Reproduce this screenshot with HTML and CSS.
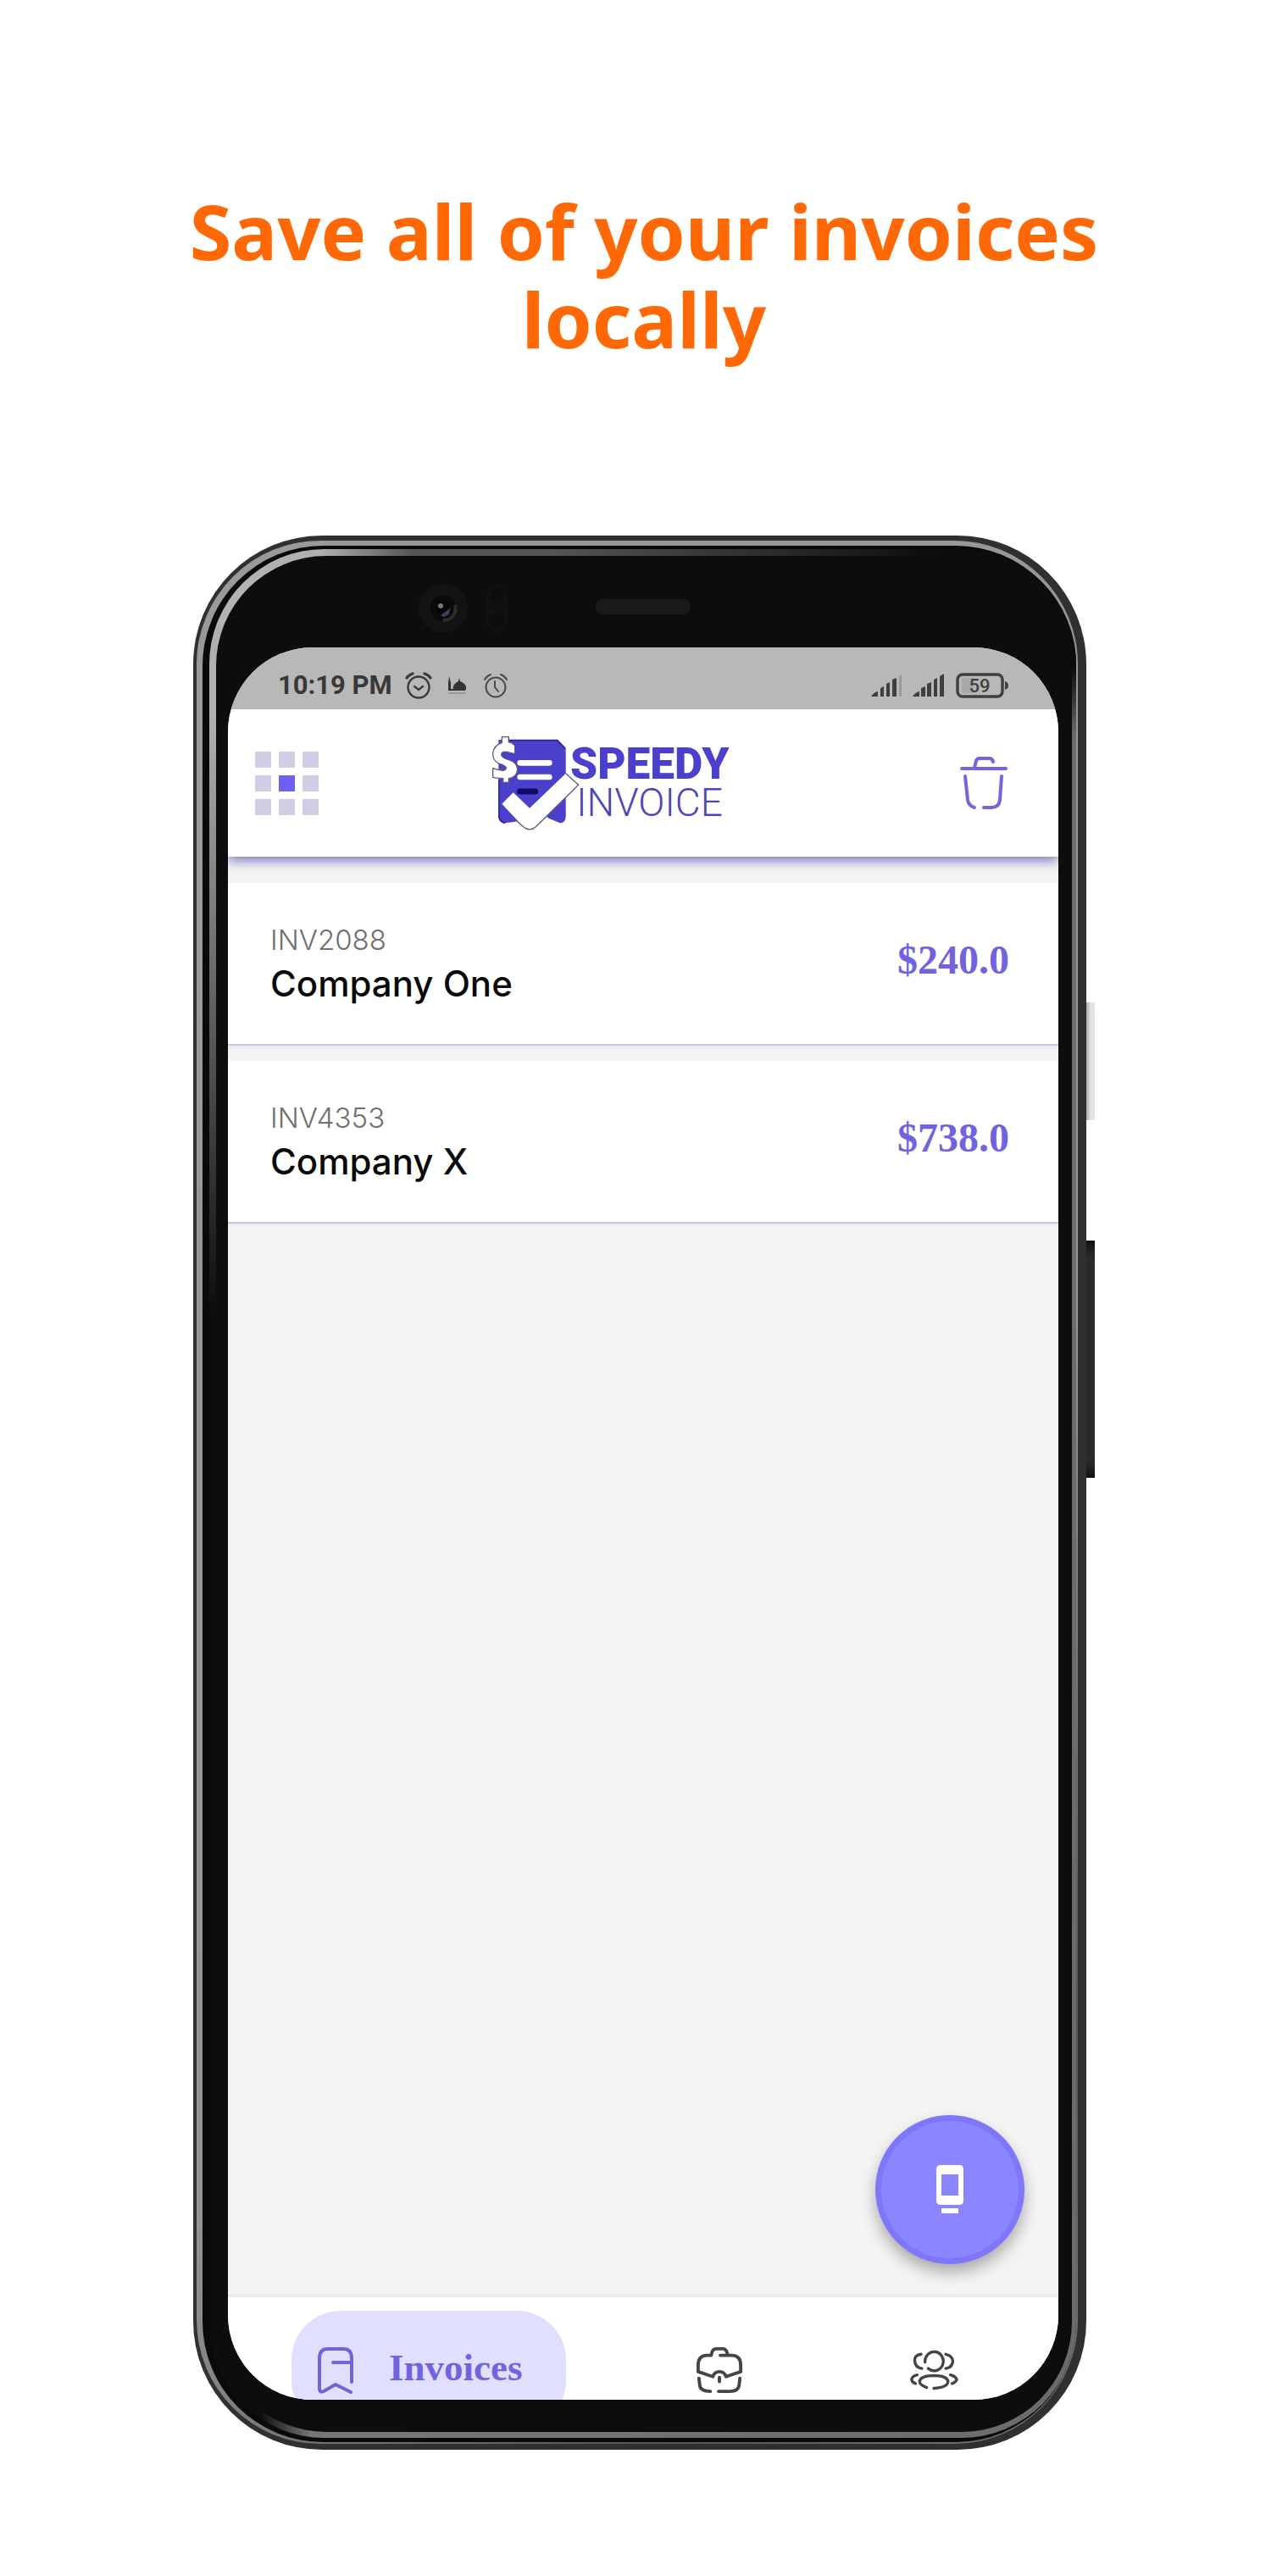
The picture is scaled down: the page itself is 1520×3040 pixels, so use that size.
FILE: index.html
```html
<!DOCTYPE html>
<html lang="en">
<head>
<meta charset="utf-8">
<meta name="viewport" content="width=device-width, initial-scale=1">
<title>Speedy Invoice</title>
<link rel="stylesheet" href="styles.css">
</head>
<body>
<div class="page">
  <h1 class="headline">Save all of your invoices locally</h1>

  <div class="phone">
    <span class="side-key side-key-power"></span>
    <span class="side-key side-key-volume"></span>
    <div class="rim"><div class="groove"><div class="bevel"><div class="glass">
      <svg class="sensors" viewBox="0 0 250 60" aria-hidden="true">
        <circle cx="30" cy="30" r="29" fill="#131313"/>
        <circle cx="30" cy="30" r="15" fill="#0a0a0a"/>
        <path d="M44 26a14 14 0 0 1-14 18" fill="none" stroke="#2c2c2c" stroke-width="4"/>
        <circle cx="29" cy="29" r="8" fill="#050508"/>
        <path d="M29 38l8-6-1 4-5 3z" fill="#3a4266" stroke="#3a4266" stroke-width="2"/>
        <circle cx="27" cy="27" r="3" fill="#777"/>
        <rect x="81" y="3" width="25" height="55" rx="12" fill="#111"/>
        <circle cx="93" cy="15" r="9" fill="#0d0d0d"/>
        <circle cx="93" cy="45" r="9" fill="#0d0d0d"/>
      </svg>
      <span class="speaker"></span>

      <div class="screen">
        <div class="status">
          <span class="clock">10:19 PM</span>
          <svg class="status-alarm" viewBox="0 0 32 32" aria-hidden="true">
            <g fill="none" stroke="#3b3b3b" stroke-width="2.4" stroke-linecap="round">
              <circle cx="16" cy="18" r="12.500"/>
              <path d="M11 17l5 4 5-4"/>
              <path d="M2 7q3-4 7-5M30 7q-3-4-7-5" stroke-width="3.200"/>
            </g>
          </svg>
          <svg class="status-mosque" viewBox="0 0 24 24" aria-hidden="true">
            <path d="M1 18V9l1-8 2 8v7h3c-1-4 2-7 6-9l1-4 1 4c5 2 8 5 7 9l-1 2z" fill="#333"/>
            <path d="M1 21h21" stroke="#8f8f8f" stroke-width="1.500"/>
          </svg>
          <svg class="status-timer" viewBox="0 0 30 30" aria-hidden="true">
            <g fill="none" stroke="#4a4a4a" stroke-width="2" stroke-linecap="round">
              <circle cx="15" cy="17" r="11.500"/>
              <path d="M14 10v7l4 5"/>
              <path d="M2 8q2-4 7-6M28 8q-2-4-7-6"/>
            </g>
          </svg>
          <svg class="signal signal-first" viewBox="0 0 38 28" aria-hidden="true">
            <path d="M0 27q3-5 8-6v6zM11 27V17l4-2v12zM18 27V12l4-2v17zM25 27V7l5-2v22z" fill="#3f3f3f"/>
            <path d="M33 27V3l3-2v26z" fill="#9b9b9b"/>
          </svg>
          <svg class="signal" viewBox="0 0 38 28" aria-hidden="true">
            <path d="M0 27q3-5 8-6v6zM10 27V17l5-2v12zM17 27V12l5-2v17zM25 27V7l4-2v22zM32 27V3l5-3v27z" fill="#3f3f3f"/>
          </svg>
          <svg class="battery" viewBox="0 0 62 30" aria-hidden="true">
            <rect x="7" y="6" width="14" height="18" fill="#a8a8a8"/>
            <rect x="2" y="2" width="53" height="26" rx="6" fill="none" stroke="#404040" stroke-width="3.500"/>
            <path d="M58 10q4 1 4 5t-4 5z" fill="#404040"/>
            <text x="28" y="23" text-anchor="middle" class="battery-text">59</text>
          </svg>
        </div>

        <header class="topbar">
          <button class="icon-button" type="button" aria-label="Menu">
            <svg class="grid-icon" viewBox="0 0 75 75">
              <path fill="#d2cde4" d="M0 0h19v19H0zM28 0h19v19H28zM56 0h19v19H56zM0 28h19v19H0zM56 28h19v19H56zM0 56h19v19H0zM28 56h19v19H28zM56 56h19v19H56z"/>
              <path fill="#6c5ff2" d="M28 28h19v19H28z"/>
            </svg>
          </button>
          <svg class="logo" viewBox="54 80 864 345" role="img" aria-label="Speedy Invoice">
            <path d="M82 98H290L320 128V368Q320 392 300 393L260 376Q235 350 200 372L140 388L105 393Q84 390 82 370Z" fill="#4b40cb"/>
            <path d="M84 240V374Q88 390 105 393M120 100H290L318 128" fill="none" stroke="#2c2290" stroke-width="5"/>
            <path d="M158 180H262M158 230H262" stroke="#fff" stroke-width="20" stroke-linecap="round"/>
            <path d="M158 281H212" stroke="#120a66" stroke-width="21" stroke-linecap="round"/>
            <path d="M94 325L134 285L192 340L320 217L365 258L214 406Q192 425 170 406Z" fill="#fff"/>
            <path d="M140 380L170 406Q192 425 214 406L365 258L320 217" fill="none" stroke="#5d5a80" stroke-width="4"/>
            <path d="M140 118V148L124 144Q92 134 92 152Q94 164 122 170Q149 180 149 204Q146 232 118 235V249H98V235Q78 235 62 231V199Q80 205 98 207Q112 204 108 194Q98 187 82 182Q60 170 62 144Q66 118 94 108V88H118V106Q130 108 140 118Z" fill="#fff" stroke="#5d5a80" stroke-width="4"/>
            <text x="336" y="235" class="logo-bold">SPEEDY</text>
            <text x="358" y="367" class="logo-light">INVOICE</text>
          </svg>
          <button class="icon-button" type="button" aria-label="Delete">
            <svg class="trash-icon" viewBox="0 0 58 66" fill="none" stroke="#7564dc" stroke-width="4" stroke-linecap="round" stroke-linejoin="round">
              <path d="M3 16H55M18 15L20 7Q21 4 24 4H36Q39 4 40 8M7 25L10 53Q11 60 18 62M50 25L48 53Q47 62 38 62H29"/>
            </svg>
          </button>
        </header>

        <main class="content">
          <ul class="invoices">
            <li class="invoice">
              <div class="invoice-info">
                <span class="invoice-number">INV2088</span>
                <span class="invoice-name">Company One</span>
              </div>
              <span class="invoice-total">$240.0</span>
            </li>
            <li class="invoice">
              <div class="invoice-info">
                <span class="invoice-number">INV4353</span>
                <span class="invoice-name">Company X</span>
              </div>
              <span class="invoice-total">$738.0</span>
            </li>
          </ul>
          <button class="fab" type="button" aria-label="New invoice">
            <svg class="fab-icon" viewBox="0 0 32 58">
              <path fill="#fff" fill-rule="evenodd" d="M5 0H27Q32 0 32 5V42Q32 47 27 47H5Q0 47 0 42V5Q0 0 5 0ZM6 11V36H26V11ZM6 51H26V57H6Z"/>
            </svg>
          </button>
        </main>

        <nav class="tabs">
          <a class="tab tab-active" href="#invoices">
            <svg class="bookmark-icon" viewBox="0 0 44 56" fill="none" stroke="#7264d8" stroke-width="4" stroke-linecap="round" stroke-linejoin="round">
              <path d="M41 42V14Q41 3 31 3H13Q3 3 3 14V50Q3 55 8 53L22 45L40 54M19 19H40"/>
            </svg>
            <span class="tab-label">Invoices</span>
          </a>
          <a class="tab" href="#business" aria-label="Business">
            <svg class="tab-icon" viewBox="0 0 58 58" fill="none" stroke="#454545" stroke-width="4" stroke-linecap="round" stroke-linejoin="round">
              <path d="M30 11H44Q55 11 55 23V31L37 37Q35 31 29 31T21 37L3 31V23Q3 11 14 11H19Q20 3 25 3H34Q38 4 39 10M29 38V43M4 39L5 48Q6 55 18 55M54 39L53 48Q52 55 42 55H28"/>
            </svg>
          </a>
          <a class="tab" href="#clients" aria-label="Clients">
            <svg class="tab-icon" viewBox="0 0 62 52" fill="none" stroke="#454545" stroke-width="3.600" stroke-linecap="round" stroke-linejoin="round">
              <path d="M20 16A11.500 12 0 1 1 24 24M15 6Q6 7 7 15Q8 23 16 24M46 6Q55 8 55 15Q54 23 46 24M22 48Q13 45 13 40Q15 33 31 33T49 40Q49 48 31 49M10 32Q3 34 3 38Q4 42 8 43M52 32Q59 34 60 38Q58 42 54 43"/>
            </svg>
          </a>
        </nav>
      </div>
    </div></div></div></div>
  </div>
</div>
</body>
</html>
```
FILE: styles.css
```css
* { box-sizing: border-box; }

body {
  margin: 0;
  background: #fff;
  font-family: Inter, "Liberation Sans", sans-serif;
}

.page {
  display: flex;
  flex-direction: column;
  align-items: center;
  gap: 204px;
  padding: 220px 100px 148px;
}

.headline {
  max-width: 1160px;
  margin: 0;
  color: #ff6804;
  font: bold 90px/104px "Noto Sans", "Open Sans", sans-serif;
  text-align: center;
}

/* Handset: each layer of the metal edge wraps the next */
.phone {
  position: relative;
  width: 100%;
  max-width: 1054px;
  margin-right: 10px;
  padding: 6px 10px 7px 4px;
  border-radius: 152px;
  background: #303030;
}

.rim {
  padding: 6px 2px 2px 7px;
  border-radius: 146px;
  background: linear-gradient(135deg, #9a9a9a 0, #949494 60%, #555 85%, #777 100%);
}

.groove {
  padding: 4px 0 5px 8px;
  border-radius: 142px;
  background: #0a0a0a;
}

.bevel {
  padding: 8px 5px 7px 8px;
  border-radius: 136px;
  background:
    radial-gradient(circle at 100% 0, #0d0d0d 140px, transparent 220px),
    linear-gradient(to right, #b4b4b4 0, #b0b0b0 130px, #555 240px, #555 400px, #0d0d0d 860px) 0 0 / 900px 90px no-repeat,
    linear-gradient(to bottom, #b0b0b0 200px, #0d0d0d 900px) 0 0 / 60px 80% no-repeat,
    linear-gradient(to right, #0d0d0d 60px, #777 120px, #6b6b6b) 0 100% / 100% 140px no-repeat,
    linear-gradient(to right, #0d0d0d 900px, #6b6b6b 1000px);
}

.glass {
  position: relative;
  padding: 108px 16px 38px 14px;
  border-radius: 130px;
  background: #0d0d0d;
}

.sensors {
  position: absolute;
  top: 32px;
  left: 238px;
  width: 250px;
  height: 60px;
}

.speaker {
  position: absolute;
  top: 51px;
  left: 50%;
  width: 112px;
  height: 18px;
  margin-left: -57px;
  border-radius: 8px;
  background: #1a1a1a;
}

.side-key {
  position: absolute;
  left: 100%;
  width: 10px;
}

.side-key-power {
  top: 551px;
  height: 139px;
  border-radius: 0 2px 2px 0;
  background: linear-gradient(to right, #aaa 0, #ccc 3px, #e4e4e4 5px);
}

.side-key-volume {
  top: 832px;
  height: 280px;
  background: linear-gradient(#111, #2a2a2a 20px, #2a2a2a 260px, #111);
}

.screen {
  display: flex;
  flex-direction: column;
  overflow: hidden;
  aspect-ratio: 980 / 2068;
  border-radius: 100px;
  background: #f4f4f4;
}

/* Status bar */
.status {
  position: relative;
  z-index: 1;
  display: flex;
  flex: none;
  align-items: center;
  height: 73px;
  padding: 16px 59px 0 59px;
  background: #b8b8b8;
}

.clock {
  margin-right: 15px;
  color: #383838;
  font: bold 31px/36px Roboto, sans-serif;
}

.status-alarm { width: 32px; height: 32px; margin-right: 18px; }
.status-mosque { width: 24px; height: 24px; margin-right: 18px; }
.status-timer { width: 30px; height: 30px; }
.signal { width: 38px; height: 28px; }
.signal-first { margin: 0 11px 0 auto; }
.battery { width: 62px; height: 30px; margin-left: 13px; }
.battery-text { fill: #404040; font: 500 22px Roboto, sans-serif; }

/* App header */
.topbar {
  position: relative;
  display: flex;
  flex: none;
  align-items: center;
  justify-content: space-between;
  height: 174px;
  padding: 0 59px 0 32px;
  background: #fff;
  box-shadow: 0 4px 14px #6f6cb8;
}

.icon-button {
  display: flex;
  padding: 0;
  border: 0;
  background: none;
}

.grid-icon { width: 75px; height: 75px; }
.trash-icon { width: 58px; height: 66px; }
.logo { width: 288px; height: 115px; margin-right: 62px; }
.logo-bold { fill: #4b40cb; font: 900 154px Roboto, sans-serif; }
.logo-light { fill: #5145b5; font: 300 138px Roboto, sans-serif; }

/* Invoice list */
.content {
  position: relative;
  flex: 1;
  padding-top: 31px;
}

.invoices {
  display: flex;
  flex-direction: column;
  gap: 18px;
  margin: 0;
  padding: 0;
  list-style: none;
}

.invoice {
  display: flex;
  align-items: center;
  justify-content: space-between;
  height: 192px;
  padding: 0 58px 0 50px;
  border-bottom: 2px solid #c9c6d8;
  background: #fff;
  box-shadow: 0 2px 4px #e4e2f2;
}

.invoice-info {
  display: flex;
  flex-direction: column;
  gap: 4px;
  padding-top: 4px;
}

.invoice-number { color: #707070; font-size: 33px; line-height: 40px; font-weight: 300; }
.invoice-name { color: #0a0a0a; font-size: 42px; line-height: 56px; font-weight: 500; }
.invoice-total { padding-bottom: 8px; color: #7163df; font: bold 48px/56px "Liberation Serif", serif; }

.fab {
  position: absolute;
  right: 40px;
  bottom: 39px;
  display: flex;
  align-items: center;
  justify-content: center;
  width: 176px;
  height: 176px;
  border: 7px solid #7f77fa;
  border-radius: 50%;
  background: #8b85ff;
  box-shadow: 0 10px 18px #0000004d;
}

.fab-icon { width: 32px; height: 58px; }

/* Bottom tabs */
.tabs {
  position: relative;
  display: grid;
  grid-template-columns: 453px 1fr 1fr;
  align-items: start;
  flex: none;
  height: 121px;
  padding: 16px 20px 0 0;
  background: #fff;
  box-shadow: 0 0 6px #0000001f;
}

.tab {
  display: flex;
  align-items: center;
  justify-content: center;
  height: 140px;
  text-decoration: none;
}

.tab-active {
  justify-content: flex-start;
  gap: 41px;
  width: 324px;
  margin-left: 75px;
  padding: 0 30px;
  border-radius: 58px;
  background: #e1dfff;
  color: #7264de;
  font: bold 45px/52px "Liberation Serif", serif;
}

.tab-label { padding-bottom: 6px; }

.bookmark-icon { width: 44px; height: 56px; }
.tab-icon { width: 58px; height: 56px; }
```
